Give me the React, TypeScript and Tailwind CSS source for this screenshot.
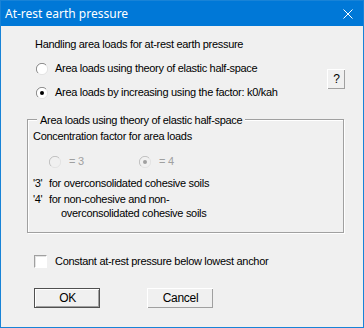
import type { ReactNode } from 'react';

const UI_FONT = '"Liberation Sans", Arial, sans-serif';

function Radio({ checked, disabled }: { checked?: boolean; disabled?: boolean }) {
  const dark = disabled ? '#c0c0c0' : '#8a8a8a';
  const dot = disabled ? '#a0a0a0' : '#000';
  return (
    <svg width="12" height="12" viewBox="0 0 12 12" className="shrink-0">
      <circle cx="6" cy="6" r="5.5" fill={disabled ? '#f0f0f0' : '#fff'} />
      <path d="M10 2 A5.5 5.5 0 0 0 2 10" fill="none" stroke={dark} strokeWidth="1" />
      <path d="M10 2 A5.5 5.5 0 0 1 2 10" fill="none" stroke="#e3e3e3" strokeWidth="1" />
      {checked && <circle cx="6" cy="6" r="2" fill={dot} />}
    </svg>
  );
}

function Button({ children, isDefault, className }: { children: ReactNode; isDefault?: boolean; className: string }) {
  return (
    <div className={`${className} ${isDefault ? 'border border-[#505050]' : ''} bg-[#f0f0f0]`}>
      <div className="flex h-full w-full items-center justify-center border-t border-l border-white shadow-[inset_-1px_-1px_0_#a0a0a0]">
        {children}
      </div>
    </div>
  );
}

export default function App() {
  return (
    <div
      className="flex h-[328px] w-[364px] flex-col border border-[#1883d7] bg-[#0078d7] text-[11px] text-black"
      style={{ fontFamily: UI_FONT }}
    >
      <div className="flex h-[25px] shrink-0 items-center justify-between pl-[4px] pr-[10px] text-white">
        <span className="text-[12px]" style={{ fontFamily: '"Noto Sans", sans-serif' }}>
          At-rest earth pressure
        </span>
        <svg width="10" height="10" viewBox="0 0 10 10">
          <path d="M0.5 0.5 L9.5 9.5 M9.5 0.5 L0.5 9.5" stroke="#fff" strokeWidth="1" />
        </svg>
      </div>

      <div className="flex-1 bg-[#f0f0f0] pl-[26px] pr-[18px] pt-[12px] tracking-[-0.3px] leading-[13px]">
        <p className="pl-[8px]">Handling area loads for at-rest earth pressure</p>

        <div className="mt-[9px] flex items-start justify-between">
          <div className="flex flex-col gap-[11px] pl-[9px] pt-[2px]">
            <div className="flex items-center gap-[7px]">
              <Radio />
              <span>Area loads using theory of elastic half-space</span>
            </div>
            <div className="flex items-center gap-[7px]">
              <Radio checked />
              <span>Area loads by increasing using the factor: k0/kah</span>
            </div>
          </div>
          <Button className="mt-[9px] h-[20px] w-[18px] text-[12px]">?</Button>
        </div>

        <div className="relative mt-[20px] h-[114px] w-[317px] border border-[#a0a0a0] px-[5px] pt-[10px] shadow-[1px_1px_0_#fff,inset_1px_1px_0_#fff]">
          <span className="absolute -top-[6px] left-[9px] bg-[#f0f0f0] px-[3px]">
            Area loads using theory of elastic half-space
          </span>
          <p>Concentration factor for area loads</p>
          <div className="mt-[12px] flex items-center text-[#a0a0a0]">
            <div className="flex w-[90px] items-center gap-[8px] pl-[16px]">
              <Radio disabled />
              <span>= 3</span>
            </div>
            <div className="flex items-center gap-[8px] pl-[16px]">
              <Radio checked disabled />
              <span>= 4</span>
            </div>
          </div>
          <div className="mt-[9px] flex flex-col">
            <div className="flex">
              <span className="w-[16px]">'3'</span>
              <span>for overconsolidated cohesive soils</span>
            </div>
            <div className="mt-[3px] flex">
              <span className="w-[16px]">'4'</span>
              <span>for non-cohesive and non-</span>
            </div>
            <p className="mt-[1px] pl-[28px]">overconsolidated cohesive soils</p>
          </div>
        </div>

        <div className="mt-[22px] flex items-center gap-[8px] pl-[7px]">
          <div className="h-[13px] w-[13px] shrink-0 border border-[#a0a0a0] border-r-white border-b-white bg-white shadow-[inset_1px_1px_0_#e3e3e3]" />
          <span>Constant at-rest pressure below lowest anchor</span>
        </div>

        <div className="mt-[20px] flex gap-[47px] pl-[7px]">
          <Button isDefault className="h-[20px] w-[66px] text-[12px]">OK</Button>
          <Button className="h-[20px] w-[66px] text-[12px]">Cancel</Button>
        </div>
      </div>
    </div>
  );
}
